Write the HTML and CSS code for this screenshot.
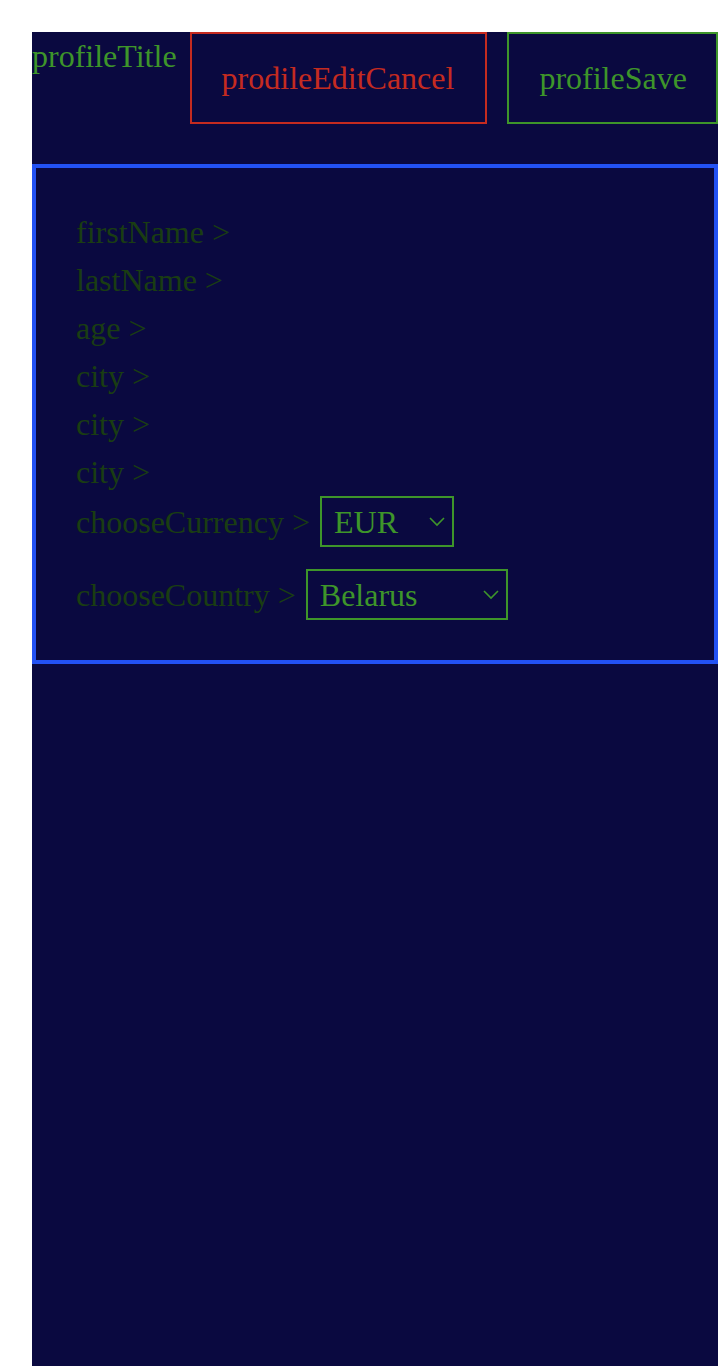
FILE: index.html
```html
<!DOCTYPE html>
<html lang="en">
<head>
<meta charset="utf-8">
<title>Profile</title>
<link rel="stylesheet" href="styles.css">
</head>
<body>
<div class="page">
  <div class="header">
    <div class="title">profileTitle</div>
    <button class="btn btn-cancel">prodileEditCancel</button>
    <button class="btn btn-save">profileSave</button>
  </div>
  <div class="panel">
    <div class="row">firstName &gt;</div>
    <div class="row">lastName &gt;</div>
    <div class="row">age &gt;</div>
    <div class="row">city &gt;</div>
    <div class="row">city &gt;</div>
    <div class="row">city &gt;</div>
    <div class="row">chooseCurrency &gt;<span class="select-wrap"><select class="sel sel-currency"><option>EUR</option><option>USD</option></select><svg class="chev" width="16" height="10" viewBox="0 0 16 10"><path d="M1 1l7 7 7-7" fill="none" stroke="#3e952a" stroke-width="1.6"/></svg></span></div>
    <div class="row row-country">chooseCountry &gt;<span class="select-wrap"><select class="sel sel-country"><option>Belarus</option><option>Poland</option></select><svg class="chev" width="16" height="10" viewBox="0 0 16 10"><path d="M1 1l7 7 7-7" fill="none" stroke="#3e952a" stroke-width="1.6"/></svg></span></div>
  </div>
</div>
</body>
</html>
```
FILE: styles.css
```css
html, body {
  margin: 0;
  padding: 0;
  background: #ffffff;
}
body {
  font-family: "Liberation Serif", "Times New Roman", serif;
  font-size: 32px;
  line-height: 48px;
  overflow: hidden;
}
.page {
  margin: 32px 0 0 32px;
  min-height: calc(100vh - 32px);
  background: #0a0940;
}
.header {
  display: flex;
  align-items: flex-start;
  white-space: nowrap;
}
.title {
  color: #3e952a;
  flex: none;
}
.btn {
  flex: none;
  font-family: inherit;
  font-size: 32px;
  line-height: 48px;
  background: transparent;
  padding: 20px 31px 20px 30px;
  margin: 0;
  cursor: pointer;
}
.btn-cancel {
  margin-left: 13px;
  color: #c52b20;
  border: 2px solid #c52b20;
}
.btn-save {
  margin-left: 20px;
  padding-right: 29px;
  color: #3e952a;
  border: 2px solid #3e952a;
}
.panel {
  margin-top: 40px;
  border: 4px solid #2352f4;
  padding: 40px;
  color: #1a3d12;
}
.row {
  white-space: nowrap;
}
.row-country {
  margin-top: 22px;
}
.select-wrap {
  position: relative;
  display: inline-block;
  margin-left: 10px;
}
.sel {
  -webkit-appearance: none;
  appearance: none;
  font-family: inherit;
  font-size: 32px;
  color: #3e952a;
  background: transparent;
  border: 2px solid #3e952a;
  border-radius: 0;
  height: 51px;
  padding: 1px 12px 0;
  margin: 0;
  vertical-align: baseline;
}
.sel-currency {
  width: 134px;
}
.sel-country {
  width: 202px;
}
.chev {
  position: absolute;
  right: 9px;
  top: 50%;
  margin-top: -5px;
  pointer-events: none;
}
```
